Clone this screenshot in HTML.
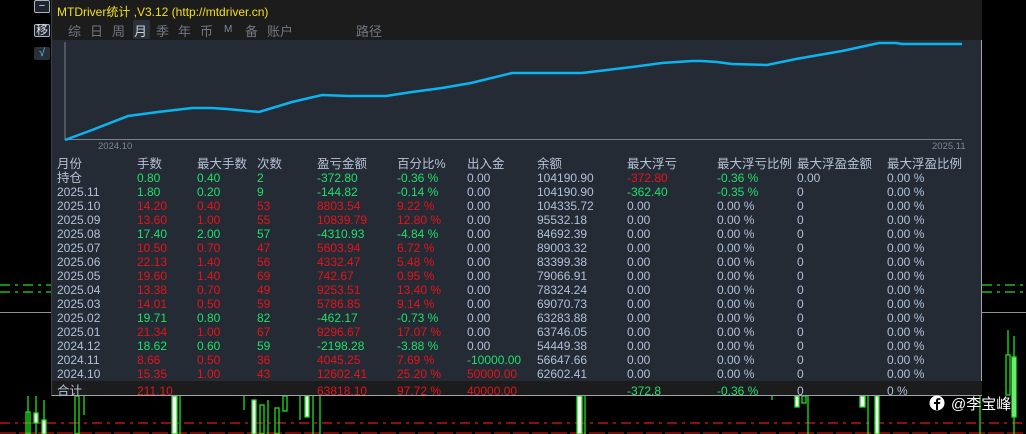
<!DOCTYPE html><html><head><meta charset="utf-8"><style>
*{margin:0;padding:0;box-sizing:border-box}
body{width:1026px;height:434px;background:#000;position:relative;overflow:hidden;font-family:"Liberation Sans","Noto Sans CJK SC",sans-serif;font-size:12px}
.a{position:absolute;white-space:nowrap}
.btn{position:absolute;left:34px;width:16px;height:13px;border:1px solid #a8b4c4;border-radius:2px;background:#1f252d;color:#dde;font-size:11px;line-height:11px;text-align:center}
#panel{position:absolute;left:51px;top:0;width:931px;height:396px;background:#252b34;border-right:1px solid #9aa3b0;border-bottom:1px solid #9aa3b0;border-left:1px solid #3a404a}
.top{position:absolute;left:0;top:0;width:930px;height:40px;background:#1c1c1c}
.tab{position:absolute;top:21px;color:#6f7782;font-size:13px}
.row{position:absolute;left:0;width:930px;height:14px;line-height:14px}
.row span{position:absolute}
.g{color:#1fe06c}.r{color:#e4141c}.b{color:#b0c0d8}
.hd{color:#b4c2d6;font-size:12.5px}
</style></head><body>
<svg class="a" style="left:0;top:0" width="1026" height="434">
<g stroke="#1ee01e" stroke-dasharray="10,5,3,5" stroke-width="1.3">
<line x1="0" y1="285" x2="52" y2="285"/><line x1="0" y1="292" x2="52" y2="292"/>
<line x1="982" y1="285" x2="1026" y2="285"/><line x1="982" y1="292" x2="1026" y2="292"/></g>
<line x1="0" y1="312.5" x2="1026" y2="312.5" stroke="#8c9098"/>
<line x1="0" y1="423" x2="1026" y2="423" stroke="#e01818" stroke-dasharray="10,5,3,5" stroke-width="1.3"/>
<line x1="0" y1="433" x2="1026" y2="433" stroke="#e01818" stroke-dasharray="16,3"/>
<g stroke="#1ee01e" fill="#fff" stroke-width="1.3">
<line x1="28" y1="396" x2="28" y2="434"/><rect x="26" y="412" width="4" height="22" fill="none"/>
<line x1="36" y1="396" x2="36" y2="434"/><rect x="34" y="413" width="4" height="10"/>
<line x1="44" y1="400" x2="44" y2="434"/><rect x="42" y="420" width="4" height="14"/>
<rect x="75" y="396" width="4" height="38" fill="none"/><line x1="84" y1="396" x2="84" y2="415"/>
<rect x="172" y="396" width="5" height="38"/><line x1="180" y1="396" x2="180" y2="434"/>
<line x1="244" y1="396" x2="244" y2="410"/><rect x="252" y="400" width="4" height="34"/><rect x="260" y="405" width="4" height="29" fill="none"/><line x1="268" y1="400" x2="268" y2="434"/><rect x="275" y="408" width="4" height="26" fill="none"/>
<rect x="283" y="396" width="4" height="15" fill="none"/><line x1="300" y1="396" x2="300" y2="420"/><rect x="305" y="396" width="4" height="21"/><line x1="313" y1="396" x2="313" y2="434"/>
<line x1="320" y1="396" x2="320" y2="434"/>
<rect x="577" y="396" width="5" height="38"/><line x1="585" y1="396" x2="585" y2="434"/>
<line x1="772" y1="396" x2="772" y2="400"/><rect x="795" y="396" width="4" height="11"/><rect x="802" y="396" width="4" height="7" fill="none"/><line x1="808" y1="396" x2="808" y2="434"/>
<rect x="860" y="396" width="5" height="11"/><line x1="868" y1="396" x2="868" y2="434"/><rect x="875" y="396" width="4" height="38"/>
<line x1="980" y1="396" x2="980" y2="434"/><rect x="1006" y="355" width="4" height="40" fill="none"/><rect x="1012" y="357" width="4" height="60"/><line x1="1014" y1="336" x2="1014" y2="434"/><line x1="1008" y1="330" x2="1008" y2="355"/>
</g></svg>
<div class="btn" style="top:0">−</div>
<div class="btn" style="top:24px;font-size:12px">移</div>
<div class="btn" style="top:47px;background:#2a3038;border-color:#2a3038;color:#5bf">√</div>
<div id="panel">
<div class="top"></div>
<div class="a" style="left:5px;top:3px;color:#f0e020;font-size:12px">MTDriver统计 ,V3.12 (http://mtdriver.cn)</div>
<div class="a" style="left:81px;top:20px;width:17px;height:19px;background:#2a313b;border-radius:2px"></div>
<div class="tab" style="left:16px">综</div><div class="tab" style="left:38px">日</div><div class="tab" style="left:60px">周</div><div class="tab" style="left:82px;color:#c8d0dc">月</div><div class="tab" style="left:104px">季</div><div class="tab" style="left:126px">年</div><div class="tab" style="left:148px">币</div><div class="tab" style="left:172px;font-size:10px;top:24px;color:#7a8aa0">M</div><div class="tab" style="left:193px">备</div><div class="tab" style="left:215px">账户</div><div class="tab" style="left:304px">路径</div>
<svg class="a" style="left:0;top:40px" width="930" height="120">
<line x1="13" y1="2" x2="13" y2="100" stroke="#7a7f88"/><line x1="13" y1="99.5" x2="910" y2="99.5" stroke="#7a7f88"/>
<polyline fill="none" stroke="#0ab4f0" stroke-width="2.5" points="13,100 40,90 76,76 106,72 140,68 160,68 175,69 207,72 240,62 270,55 296,56 334,56 360,52 390,48 419,43 460,33 530,33 580,27 610,23 640,21 650,21 665,22 680,24 715,25 744,19 790,11 827,3 844,3 850,4 910,4"/>
<text x="46" y="109" fill="#7c8594" font-size="9.5" font-family="Liberation Sans">2024.10</text>
<text x="880" y="109" fill="#7c8594" font-size="9.5" font-family="Liberation Sans">2025.11</text>
</svg>
<div class="a" style="left:0;top:381px;width:930px;height:14px;background:#1c1c1c"></div>
<div id="rows"></div>
</div>
<svg class="a" style="left:929px;top:395px" width="16" height="16"><circle cx="8" cy="8" r="7.5" fill="#fff"/><path d="M9,15 V9 H11 L11.3,7 H9 V5.8 C9,5.2 9.3,4.9 10,4.9 H11.4 V3.2 C10.8,3.1 10.2,3.1 9.7,3.1 C8,3.1 7,4 7,5.7 V7 H5 V9 H7 V15 Z" fill="#000"/></svg>
<div class="a" style="left:951px;top:393px;color:#fff;font-size:15px">@李宝峰</div>
<script>
var C=[5,85,145,205,265,345,415,485,575,665,745,835];
var H=["月份","手数","最大手数","次数","盈亏金额","百分比%","出入金","余额","最大浮亏","最大浮亏比例","最大浮盈金额","最大浮盈比例"];
var D=[
["持仓","g0.80","g0.40","g2","g-372.80","g-0.36 %","b0.00","b104190.90","r-372.80","g-0.36 %","b0.00","b0.00 %"],
["2025.11","g1.80","g0.20","g9","g-144.82","g-0.14 %","b0.00","b104190.90","g-362.40","g-0.35 %","b0","b0.00 %"],
["2025.10","r14.20","r0.40","r53","r8803.54","r9.22 %","b0.00","b104335.72","b0.00","b0.00 %","b0","b0.00 %"],
["2025.09","r13.60","r1.00","r55","r10839.79","r12.80 %","b0.00","b95532.18","b0.00","b0.00 %","b0","b0.00 %"],
["2025.08","g17.40","g2.00","g57","g-4310.93","g-4.84 %","b0.00","b84692.39","b0.00","b0.00 %","b0","b0.00 %"],
["2025.07","r10.50","r0.70","r47","r5603.94","r6.72 %","b0.00","b89003.32","b0.00","b0.00 %","b0","b0.00 %"],
["2025.06","r22.13","r1.40","r56","r4332.47","r5.48 %","b0.00","b83399.38","b0.00","b0.00 %","b0","b0.00 %"],
["2025.05","r19.60","r1.40","r69","r742.67","r0.95 %","b0.00","b79066.91","b0.00","b0.00 %","b0","b0.00 %"],
["2025.04","r13.38","r0.70","r49","r9253.51","r13.40 %","b0.00","b78324.24","b0.00","b0.00 %","b0","b0.00 %"],
["2025.03","r14.01","r0.50","r59","r5786.85","r9.14 %","b0.00","b69070.73","b0.00","b0.00 %","b0","b0.00 %"],
["2025.02","g19.71","g0.80","g82","g-462.17","g-0.73 %","b0.00","b63283.88","b0.00","b0.00 %","b0","b0.00 %"],
["2025.01","r21.34","r1.00","r67","r9296.67","r17.07 %","b0.00","b63746.05","b0.00","b0.00 %","b0","b0.00 %"],
["2024.12","g18.62","g0.60","g59","g-2198.28","g-3.88 %","b0.00","b54449.38","b0.00","b0.00 %","b0","b0.00 %"],
["2024.11","r8.66","r0.50","r36","r4045.25","r7.69 %","g-10000.00","b56647.66","b0.00","b0.00 %","b0","b0.00 %"],
["2024.10","r15.35","r1.00","r43","r12602.41","r25.20 %","r50000.00","b62602.41","b0.00","b0.00 %","b0","b0.00 %"],
["合计","r211.10","","","r63818.10","r97.72 %","r40000.00","","g-372.8","g-0.36 %","b0","b0 %"]];
var h='<div class="row hd" style="top:157px">';H.forEach(function(t,i){h+='<span style="left:'+C[i]+'px">'+t+'</span>'});h+='</div>';
D.forEach(function(r,j){var top=171+j*14+(j==15?3:0);h+='<div class="row" style="top:'+top+'px">';r.forEach(function(t,i){if(!t)return;var c,s;if(i==0){c=(j==0||j==15)?'hd':'b';s=t}else{c=t[0];s=t.slice(1)}h+='<span class="'+c+'" style="left:'+C[i]+'px">'+s+'</span>'});h+='</div>'});
document.getElementById('rows').innerHTML=h;
</script>
</body></html>
